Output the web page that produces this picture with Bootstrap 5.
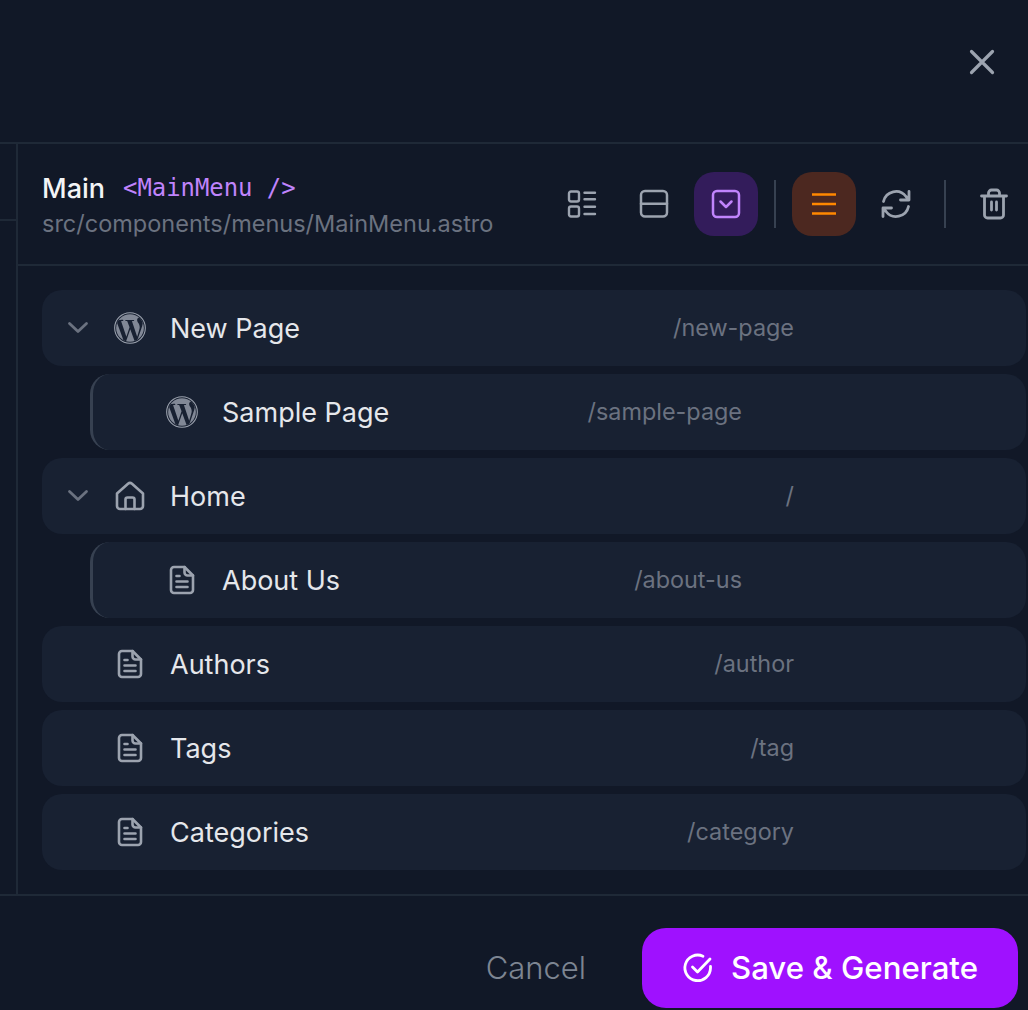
<!DOCTYPE html>
<html lang="en">
  <head>
    <meta charset="UTF-8" />
    <meta name="viewport" content="width=device-width, initial-scale=1" />
    <title>Menu editor</title>
    <link href="https://cdn.jsdelivr.net/npm/bootstrap@5.3.2/dist/css/bootstrap.min.css" rel="stylesheet" />
    <style>
      html, body {
        height: 1010px;
        overflow: hidden;
      }
      body {
        background-color: #111827;
        font-family: Inter, "Liberation Sans", sans-serif;
        color: #e5e7eb;
      }
      svg {
        display: block;
        flex: none;
      }
      .top-strip {
        height: 144px;
        border-bottom: 2px solid #1f2937;
        padding: 46px 30px 0 0;
      }
      .close-btn {
        color: #9ca3af;
      }
      .side-strip {
        width: 18px;
        border-right: 2px solid #1f2937;
      }
      .side-head {
        height: 77px;
        border-bottom: 2px solid #1f2937;
      }
      .menu-head {
        height: 122px;
        border-bottom: 2px solid #1f2937;
        padding: 0 2px 0 24px;
      }
      .menu-title {
        font-size: 27px;
        line-height: 38px;
        font-weight: 500;
        color: #f3f4f6;
      }
      .menu-tag {
        font-family: "DejaVu Sans Mono", monospace;
        font-size: 23.9px;
        font-weight: 400;
        color: #c084fc;
        margin-left: 18px;
        position: relative;
        top: -2px;
      }
      .menu-file {
        font-size: 23.5px;
        line-height: 30px;
        color: #6b7280;
      }
      .tool-btn {
        width: 64px;
        height: 64px;
        border-radius: 20px;
        color: #9ca3af;
      }
      .tool-purple {
        background-color: #331c5b;
        color: #c084fc;
      }
      .tool-orange {
        background-color: #4c2820;
        color: #ff8800;
      }
      .tool-sep {
        width: 2px;
        height: 48px;
        margin: 0 8px;
        background-color: #374151;
      }
      .tool-row {
        gap: 8px;
      }
      .menu-list {
        padding: 24px 2px 24px 24px;
        gap: 8px;
      }
      .menu-row {
        height: 76px;
        border-radius: 20px;
        background-color: #182132;
        padding-left: 24px;
      }
      .menu-row.nested {
        margin-left: 48px;
        border-left: 3px solid #374151;
        padding-left: 25px;
      }
      .row-chevron {
        width: 24px;
        color: #6b7280;
      }
      .row-icon {
        width: 32px;
        margin-left: 24px;
        color: #9ca3af;
      }
      .row-name {
        font-size: 27px;
        margin-left: 24px;
        padding-top: 2px;
        color: #e5e7eb;
      }
      .row-path {
        font-size: 23.4px;
        color: #6b7280;
        margin-left: auto;
        margin-right: 232px;
      }
      .nested .row-path {
        margin-right: 284px;
      }
      .wp-mark {
        fill: #182132;
      }
      .menu-foot {
        height: 116px;
        border-top: 2px solid #1f2937;
        padding: 32px 10px 0 0;
      }
      .cancel-link {
        font-size: 31px;
        font-weight: 300;
        color: #7d8592;
        margin-right: 56px;
        height: 80px;
      }
      .save-btn {
        width: 376px;
        height: 80px;
        border-radius: 24px;
        background-color: #9f11ff;
        color: #fff;
        font-size: 31.2px;
        font-weight: 500;
        gap: 17px;
        border: 0;
      }
    </style>
  </head>
  <body>
    <svg width="0" height="0" class="position-absolute">
      <defs>
        <clipPath id="wp-clip"><circle cx="12" cy="12" r="10.4" /></clipPath>
        <symbol id="i-doc" viewBox="0 0 32 32" fill="none" stroke="currentColor" stroke-width="2.6" stroke-linecap="round" stroke-linejoin="round">
          <path d="M18.5 3H8a3 3 0 0 0-3 3v20a3 3 0 0 0 3 3h16a3 3 0 0 0 3-3V11.5z" />
          <path d="M18.5 3v5.5a3 3 0 0 0 3 3H27" />
          <path d="M10.5 12h3M10.5 17.5h11M10.5 23h11" />
        </symbol>
        <symbol id="i-wp" viewBox="0 0 24 24">
          <circle cx="12" cy="12" r="11.5" fill="none" stroke="currentColor" stroke-width=".8" />
          <circle cx="12" cy="12" r="10.4" fill="currentColor" fill-opacity=".8" />
          <g clip-path="url(#wp-clip)">
            <path class="wp-mark" d="M21.469 6.825c.84 1.537 1.318 3.3 1.318 5.175 0 3.979-2.156 7.456-5.363 9.325l3.295-9.527c.615-1.54.82-2.771.82-3.864 0-.405-.026-.78-.07-1.11m-7.981.105c.647-.03 1.232-.105 1.232-.105.582-.075.514-.93-.067-.899 0 0-1.755.135-2.88.135-1.064 0-2.85-.15-2.85-.15-.585-.03-.661.855-.075.885 0 0 .54.061 1.125.09l1.68 4.605-2.37 7.08L5.354 6.9c.649-.03 1.234-.1 1.234-.1.585-.075.516-.93-.065-.896 0 0-1.746.138-2.874.138-.2 0-.438-.008-.69-.015C4.911 3.15 8.235 1.215 12 1.215c2.809 0 5.365 1.072 7.286 2.833-.046-.003-.091-.009-.141-.009-1.06 0-1.812.923-1.812 1.914 0 .89.513 1.643 1.06 2.531.411.72.89 1.643.89 2.977 0 .915-.354 1.994-.821 3.479l-1.075 3.585-3.9-11.61.001.014zM12 22.784c-1.059 0-2.081-.153-3.048-.437l3.237-9.406 3.315 9.087c.024.053.05.101.078.149-1.12.393-2.325.609-3.582.609M1.211 12c0-1.564.336-3.05.935-4.39L7.29 21.709C3.694 19.96 1.212 16.271 1.211 12M12 0C5.385 0 0 5.385 0 12s5.385 12 12 12 12-5.385 12-12S18.615 0 12 0" />
          </g>
        </symbol>
        <symbol id="i-chev" viewBox="0 0 24 24" fill="none" stroke="currentColor" stroke-width="2.8" stroke-linecap="round" stroke-linejoin="round">
          <path d="M3.5 7.5 12 15.5l8.5-8" />
        </symbol>
        <symbol id="i-home" viewBox="0 0 32 32" fill="none" stroke="currentColor" stroke-width="2.6" stroke-linecap="round" stroke-linejoin="round">
          <path d="M3 13.5 14 3.8a3 3 0 0 1 4 0l11 9.7V26a3 3 0 0 1-3 3H6a3 3 0 0 1-3-3z" />
          <path d="M11.5 29V19.5a2 2 0 0 1 2-2h5a2 2 0 0 1 2 2V29" />
        </symbol>
      </defs>
    </svg>

    <div class="top-strip d-flex justify-content-end">
      <svg class="close-btn" width="32" height="32" viewBox="0 0 32 32" fill="none" stroke="currentColor" stroke-width="3.2" stroke-linecap="round"><path d="M5.5 5.5l21 21M26.5 5.5l-21 21" /></svg>
    </div>

    <div class="d-flex">
      <div class="side-strip"><div class="side-head"></div></div>
      <div class="flex-grow-1">
        <div class="menu-head d-flex align-items-center justify-content-between">
          <div>
            <div class="menu-title">Main<span class="menu-tag">&lt;MainMenu /&gt;</span></div>
            <div class="menu-file">src/components/menus/MainMenu.astro</div>
          </div>
          <div class="tool-row d-flex align-items-center">
            <div class="tool-btn d-flex align-items-center justify-content-center">
              <svg width="32" height="32" viewBox="0 0 32 32" fill="none" stroke="currentColor" stroke-width="2.4" stroke-linecap="round" stroke-linejoin="round"><rect x="3" y="3.5" width="10" height="10" rx="2" /><rect x="3" y="18.5" width="10" height="10" rx="2" /><path d="M18.5 4.7H29M18.5 11.3H29M18.5 18.7H29M18.5 26H29" /></svg>
            </div>
            <div class="tool-btn d-flex align-items-center justify-content-center">
              <svg width="32" height="32" viewBox="0 0 32 32" fill="none" stroke="currentColor" stroke-width="2.5" stroke-linecap="round" stroke-linejoin="round"><rect x="3" y="3" width="26" height="25.5" rx="4" /><path d="M3 15.75h26" /></svg>
            </div>
            <div class="tool-btn tool-purple d-flex align-items-center justify-content-center">
              <svg width="32" height="32" viewBox="0 0 32 32" fill="none" stroke="currentColor" stroke-width="2.5" stroke-linecap="round" stroke-linejoin="round"><rect x="3" y="3" width="26" height="26" rx="4" /><path d="M10.5 13.5l5.5 5.5 5.5-5.5" /></svg>
            </div>
            <div class="tool-sep"></div>
            <div class="tool-btn tool-orange d-flex align-items-center justify-content-center">
              <svg width="32" height="32" viewBox="0 0 32 32" fill="none" stroke="currentColor" stroke-width="2.6"><path d="M4 6.5h24M4 16h24M4 25.5h24" /></svg>
            </div>
            <div class="tool-btn d-flex align-items-center justify-content-center">
              <svg width="32" height="32" viewBox="0 0 32 32" fill="none" stroke="currentColor" stroke-width="2.8" stroke-linecap="round" stroke-linejoin="round"><path d="M3.5 13.5A12.7 12.7 0 0 1 26 8.5l3 3.5M29 3.5V12h-8.5" /><path d="M28.5 18.5A12.7 12.7 0 0 1 6 23.5l-3-3.5M3 28.5V20h8.5" /></svg>
            </div>
            <div class="tool-sep"></div>
            <div class="tool-btn d-flex align-items-center justify-content-center">
              <svg width="32" height="32" viewBox="0 0 32 32" fill="none" stroke="currentColor" stroke-width="2.8" stroke-linecap="round" stroke-linejoin="round"><path d="M3.5 8h25M6.5 8v19a3 3 0 0 0 3 3h13a3 3 0 0 0 3-3V8M10.5 8V5a3 3 0 0 1 3-3h5a3 3 0 0 1 3 3v3M13.5 14v8M18.5 14v8" /></svg>
            </div>
          </div>
        </div>

        <div class="menu-list d-flex flex-column">
          <div class="menu-row d-flex align-items-center">
            <div class="row-chevron"><svg width="24" height="24"><use href="#i-chev" /></svg></div>
            <div class="row-icon"><svg width="32" height="32"><use href="#i-wp" /></svg></div>
            <div class="row-name">New Page</div>
            <div class="row-path">/new-page</div>
          </div>
          <div class="menu-row nested d-flex align-items-center">
            <div class="row-chevron"></div>
            <div class="row-icon"><svg width="32" height="32"><use href="#i-wp" /></svg></div>
            <div class="row-name">Sample Page</div>
            <div class="row-path">/sample-page</div>
          </div>
          <div class="menu-row d-flex align-items-center">
            <div class="row-chevron"><svg width="24" height="24"><use href="#i-chev" /></svg></div>
            <div class="row-icon"><svg width="32" height="32"><use href="#i-home" /></svg></div>
            <div class="row-name">Home</div>
            <div class="row-path">/</div>
          </div>
          <div class="menu-row nested d-flex align-items-center">
            <div class="row-chevron"></div>
            <div class="row-icon"><svg width="32" height="32"><use href="#i-doc" /></svg></div>
            <div class="row-name">About Us</div>
            <div class="row-path">/about-us</div>
          </div>
          <div class="menu-row d-flex align-items-center">
            <div class="row-chevron"></div>
            <div class="row-icon"><svg width="32" height="32"><use href="#i-doc" /></svg></div>
            <div class="row-name">Authors</div>
            <div class="row-path">/author</div>
          </div>
          <div class="menu-row d-flex align-items-center">
            <div class="row-chevron"></div>
            <div class="row-icon"><svg width="32" height="32"><use href="#i-doc" /></svg></div>
            <div class="row-name">Tags</div>
            <div class="row-path">/tag</div>
          </div>
          <div class="menu-row d-flex align-items-center">
            <div class="row-chevron"></div>
            <div class="row-icon"><svg width="32" height="32"><use href="#i-doc" /></svg></div>
            <div class="row-name">Categories</div>
            <div class="row-path">/category</div>
          </div>
        </div>
      </div>
    </div>

    <div class="menu-foot d-flex justify-content-end align-items-start">
      <div class="cancel-link d-flex align-items-center">Cancel</div>
      <button class="save-btn d-flex align-items-center justify-content-center">
        <svg width="32" height="32" viewBox="0 0 32 32" fill="none" stroke="currentColor" stroke-width="2.8" stroke-linecap="round" stroke-linejoin="round"><path d="M28.5 14.5V16A12.8 12.8 0 1 1 21 4.2" /><path d="M10.5 15l5 5L28 7" /></svg>
        Save &amp; Generate
      </button>
    </div>
  </body>
</html>
